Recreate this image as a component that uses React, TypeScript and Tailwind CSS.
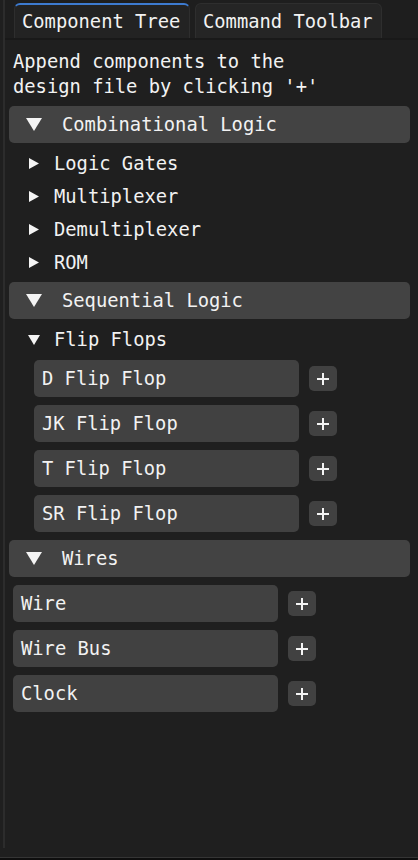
const font = { fontFamily: '"DejaVu Sans Mono", "Liberation Mono", monospace' };

function Caret({ open, big }: { open: boolean; big?: boolean }) {
  if (big) {
    return (
      <svg width="16" height="13" viewBox="0 0 16 13" className="shrink-0">
        <polygon points="0,0 16,0 8,13" fill="#f4f4f4" />
      </svg>
    );
  }
  return open ? (
    <svg width="12" height="10" viewBox="0 0 12 10" className="shrink-0">
      <polygon points="0,0 12,0 6,10" fill="#f4f4f4" />
    </svg>
  ) : (
    <svg width="10" height="11" viewBox="0 0 10 11" className="shrink-0">
      <polygon points="0,0 10,5.5 0,11" fill="#f4f4f4" />
    </svg>
  );
}

function Header({ label }: { label: string }) {
  return (
    <div className="ml-[4px] mr-[8px] h-[37px] rounded-[5px] bg-[#434343] flex items-center pl-[17px]">
      <Caret open big />
      <span className="ml-[20px]">{label}</span>
    </div>
  );
}

function Node({ label, open }: { label: string; open?: boolean }) {
  return (
    <div className="h-[33px] flex items-center pl-[23px]">
      <div className="w-[12px] flex justify-center">
        <Caret open={!!open} />
      </div>
      <span className="ml-[14px]">{label}</span>
    </div>
  );
}

function Plus() {
  return (
    <svg width="12" height="12" viewBox="0 0 12 12">
      <rect x="5" y="0" width="2" height="12" fill="#f4f4f4" />
      <rect x="0" y="5" width="12" height="2" fill="#f4f4f4" />
    </svg>
  );
}

function AddRow({ label, indent }: { label: string; indent: string }) {
  return (
    <div className={`flex items-center ${indent}`}>
      <div className="w-[265px] h-[37px] rounded-[5px] bg-[#414141] flex items-center pl-[8px]">{label}</div>
      <div className="ml-[10px] w-[28px] h-[25px] rounded-[5px] bg-[#414141] flex items-center justify-center">
        <Plus />
      </div>
    </div>
  );
}

export default function App() {
  return (
    <div className="w-[418px] h-[860px] bg-[#1f1f1f] text-[#f2f2f2] text-[18.8px] leading-[25px] flex flex-col" style={font}>
      <div className="h-[857px] flex flex-col">
        <div className="ml-[3px] h-[848px] border-l-2 border-[#2c2c2c] flex flex-col">
          {/* Tabs */}
          <div className="h-[40px] bg-[#1e1e1e] flex items-start pt-[3px] pl-[9px] gap-[5px] border-b-2 border-[#191919]">
            <div className="h-[35px] w-[176px] rounded-t-[6px] border-t-2 border-x border-t-[#3d7bd0] border-x-[#2e2e2e] bg-[#232323] flex items-center pl-[7px]">
              Component Tree
            </div>
            <div className="h-[35px] w-[187px] rounded-t-[6px] border border-b-0 border-[#2e2e2e] bg-[#252525] flex items-center pl-[7px]">
              Command Toolbar
            </div>
          </div>

          <div className="pl-[8px] pt-[9px]">
            <div>Append components to the</div>
            <div>design file by clicking '+'</div>
          </div>

          <div className="mt-[7px]">
            <Header label="Combinational Logic" />
            <div className="mt-[4px]">
              <Node label="Logic Gates" />
              <Node label="Multiplexer" />
              <Node label="Demultiplexer" />
              <Node label="ROM" />
            </div>
          </div>

          <div className="mt-[3px]">
            <Header label="Sequential Logic" />
            <div className="mt-[4px]">
              <Node label="Flip Flops" open />
            </div>
            <div className="mt-[4px] flex flex-col gap-[8px]">
              <AddRow indent="pl-[29px]" label="D Flip Flop" />
              <AddRow indent="pl-[29px]" label="JK Flip Flop" />
              <AddRow indent="pl-[29px]" label="T Flip Flop" />
              <AddRow indent="pl-[29px]" label="SR Flip Flop" />
            </div>
          </div>

          <div className="mt-[8px]">
            <Header label="Wires" />
            <div className="mt-[8px] flex flex-col gap-[8px]">
              <AddRow indent="pl-[8px]" label="Wire" />
              <AddRow indent="pl-[8px]" label="Wire Bus" />
              <AddRow indent="pl-[8px]" label="Clock" />
            </div>
          </div>
        </div>
      </div>
      <div className="h-[3px] border-t border-[#353535] bg-[#0e0e0e] rounded-br-[4px]" />
    </div>
  );
}
